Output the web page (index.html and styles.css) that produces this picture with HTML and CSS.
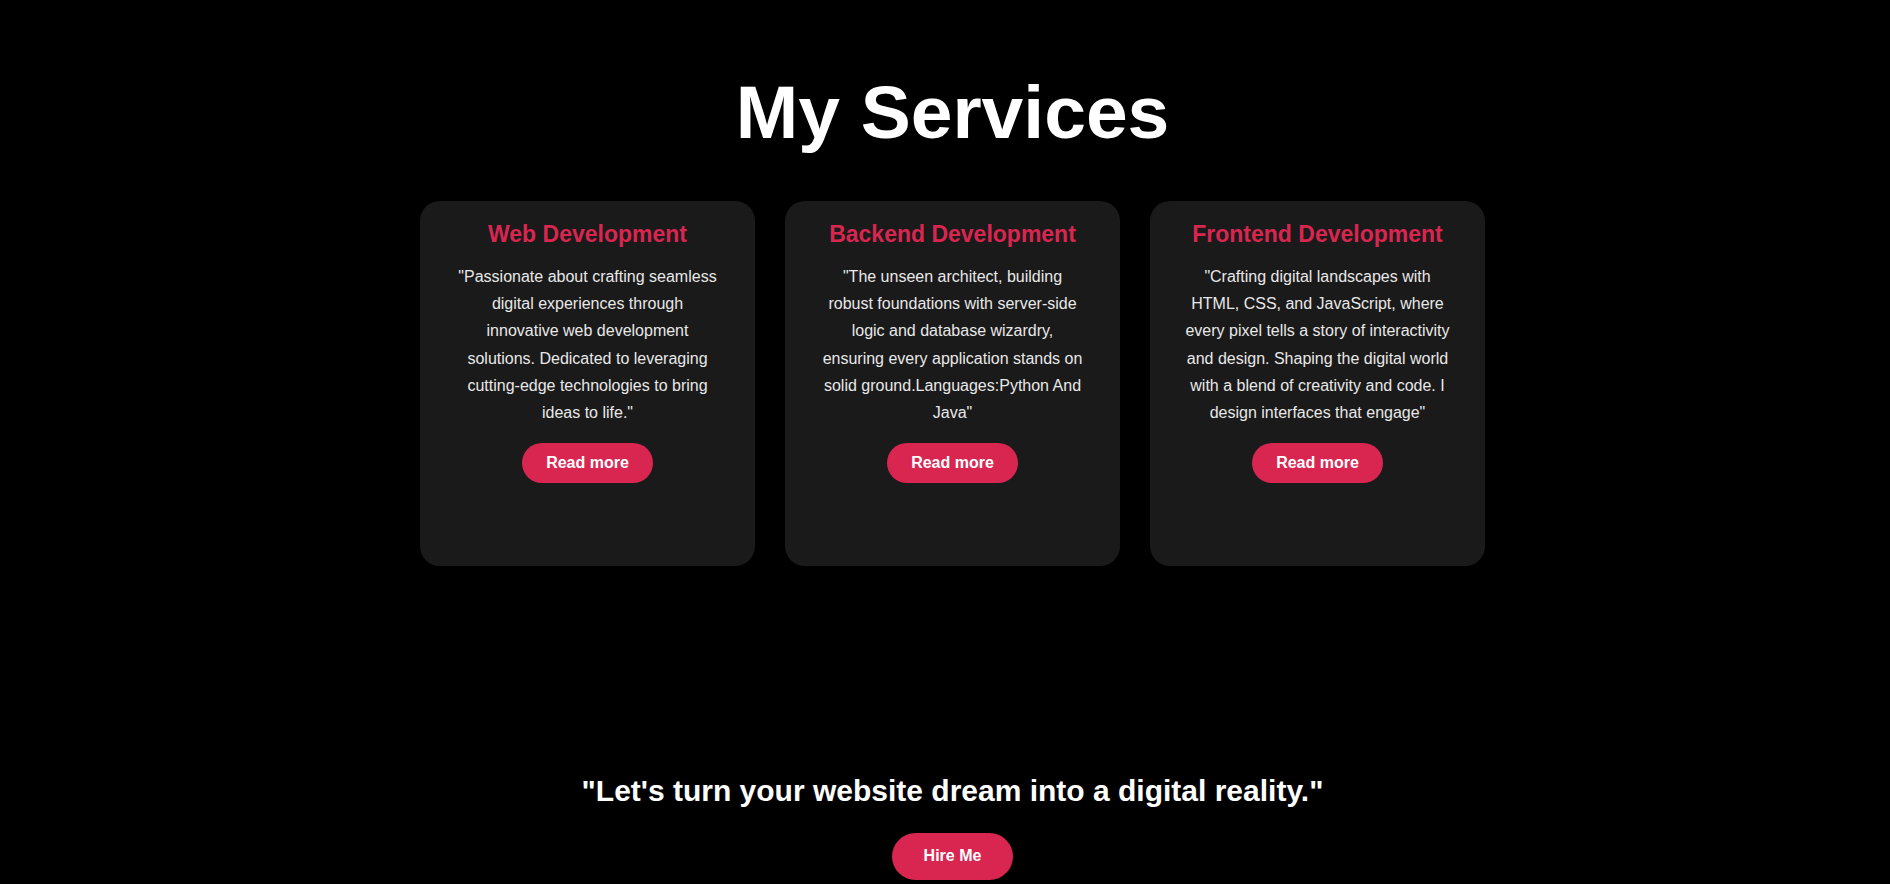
FILE: index.html
```html
<!DOCTYPE html>
<html lang="en">
<head>
<meta charset="utf-8">
<title>My Services</title>
<link rel="stylesheet" href="styles.css">
</head>
<body>
<main class="page">
  <section class="services">
    <h1 class="services-title">My Services</h1>
    <div class="cards">
      <article class="card">
        <h3 class="card-title">Web Development</h3>
        <p class="card-text">"Passionate about crafting seamless digital experiences through innovative web development solutions. Dedicated to leveraging cutting-edge technologies to bring ideas to life."</p>
        <a class="btn btn-read" href="#">Read more</a>
      </article>
      <article class="card">
        <h3 class="card-title">Backend Development</h3>
        <p class="card-text">"The unseen architect, building robust foundations with server-side logic and database wizardry, ensuring every application stands on solid ground.Languages:Python And Java"</p>
        <a class="btn btn-read" href="#">Read more</a>
      </article>
      <article class="card">
        <h3 class="card-title">Frontend Development</h3>
        <p class="card-text">"Crafting digital landscapes with HTML, CSS, and JavaScript, where every pixel tells a story of interactivity and design. Shaping the digital world with a blend of creativity and code. I design interfaces that engage"</p>
        <a class="btn btn-read" href="#">Read more</a>
      </article>
    </div>
  </section>
  <section class="cta">
    <h2 class="cta-text">"Let's turn your website dream into a digital reality."</h2>
    <a class="btn btn-hire" href="#">Hire Me</a>
  </section>
</main>
</body>
</html>
```

FILE: styles.css
```css
* {
  box-sizing: border-box;
}

html, body {
  margin: 0;
  padding: 0;
  background: #000;
  overflow: hidden;
}

body {
  font-family: "Liberation Sans", Arial, sans-serif;
  color: #fff;
}

.page {
  padding-left: 15px;
}

.services {
  padding-top: 69px;
  display: flex;
  flex-direction: column;
  align-items: center;
}

.services-title {
  margin: 0 0 46px;
  font-size: 75px;
  font-weight: 700;
  color: #fff;
}

.cards {
  display: flex;
  justify-content: center;
  gap: 30px;
}

.card {
  width: 335px;
  height: 365px;
  background: #1a1a1a;
  border-radius: 20px;
  padding: 20px 30px;
  display: flex;
  flex-direction: column;
  align-items: center;
  text-align: center;
}

.card-title {
  margin: 0;
  font-size: 23px;
  font-weight: 700;
  color: #d92651;
}

.card-text {
  width: 265.5px;
  margin: 15px 0 17px;
  font-size: 16px;
  line-height: 1.7;
  color: #e8e8e8;
}

.btn {
  display: inline-block;
  background: #d92651;
  color: #fff;
  font-weight: 700;
  font-size: 16px;
  text-decoration: none;
}

.btn-read {
  padding: 11px 24px;
  border-radius: 20px;
}

.cta {
  margin-top: 208px;
  display: flex;
  flex-direction: column;
  align-items: center;
}

.cta-text {
  margin: 0 0 25px;
  font-size: 30px;
  font-weight: 700;
  color: #fff;
}

.btn-hire {
  padding: 14px 32px 15px;
  border-radius: 24px;
}
```
